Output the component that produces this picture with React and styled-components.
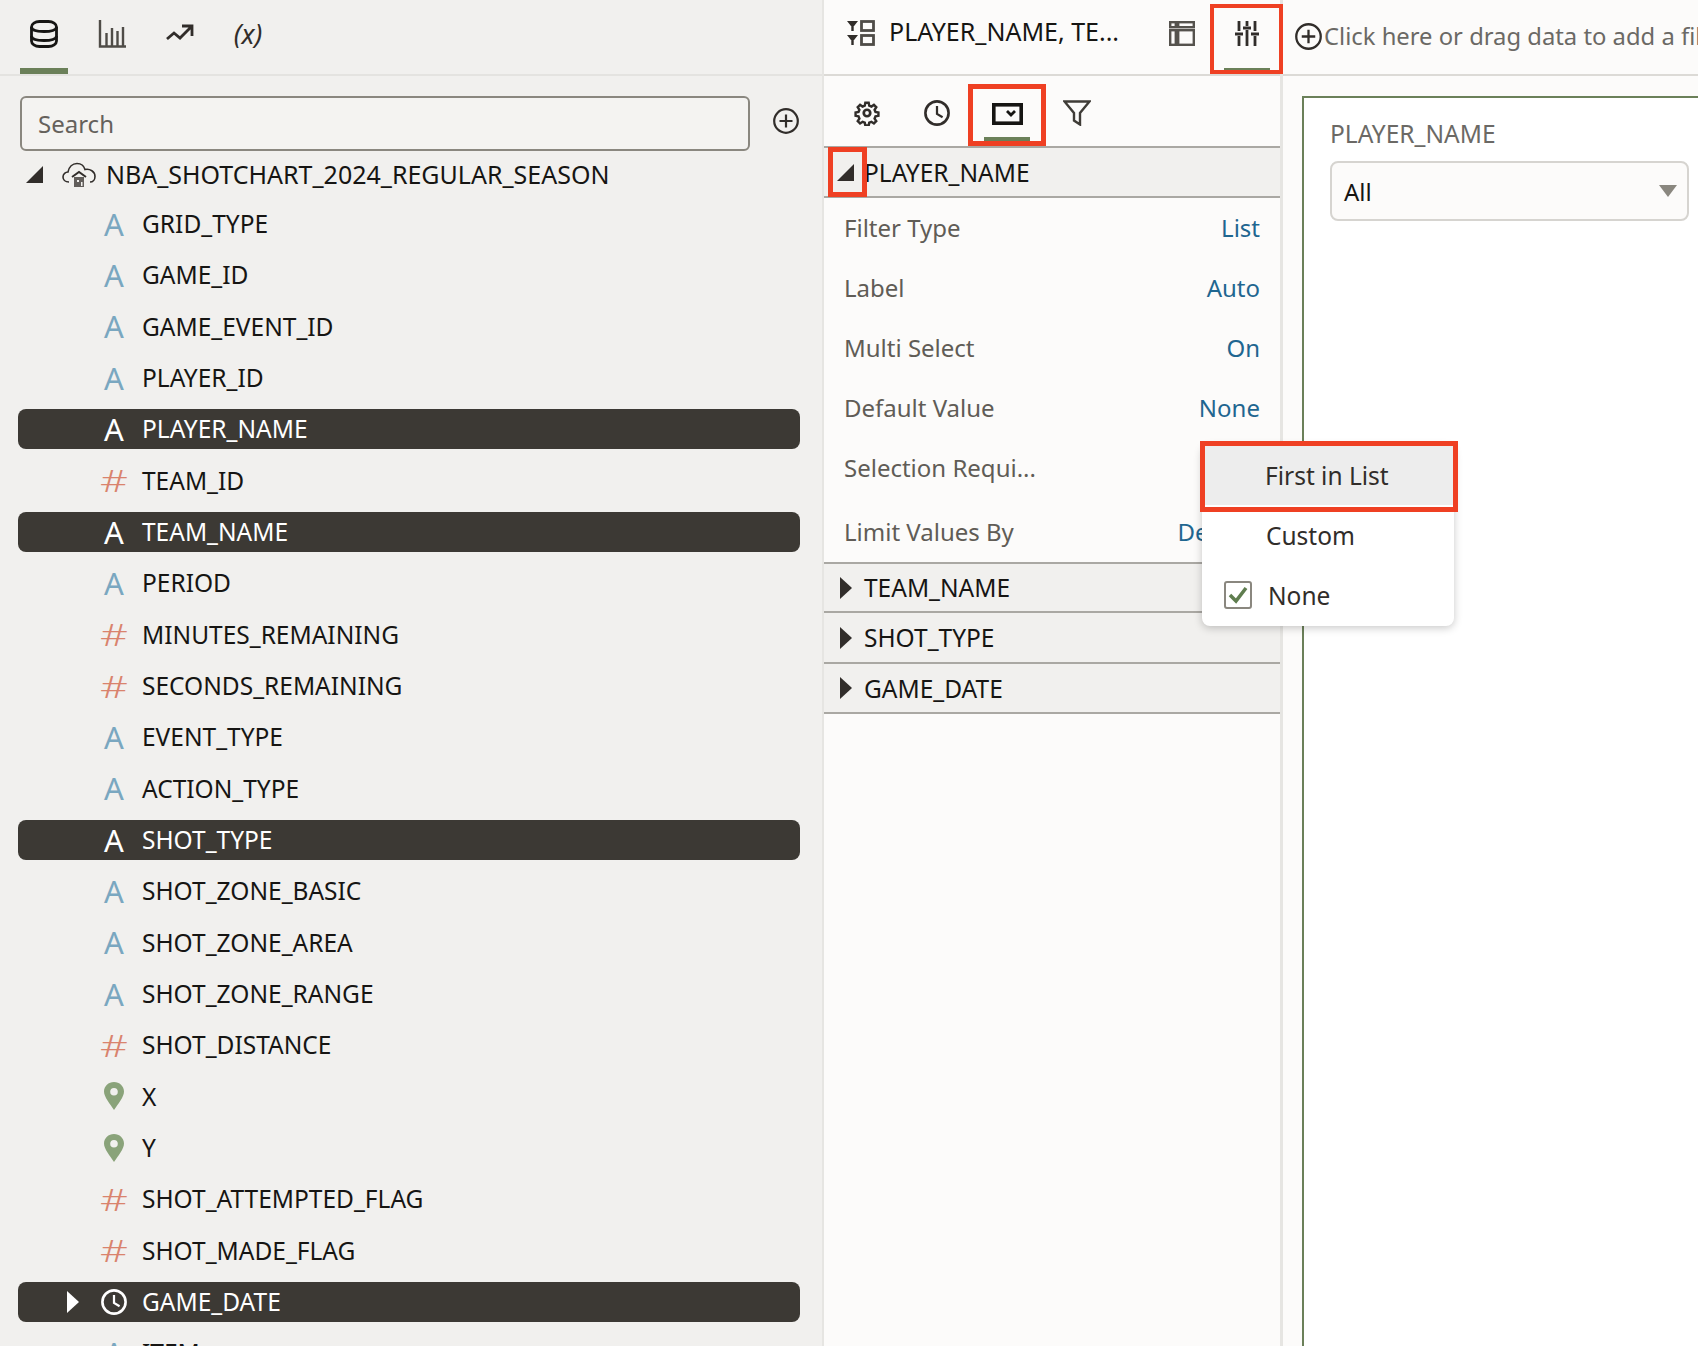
import styled, { createGlobalStyle } from "styled-components";

const GlobalStyle = createGlobalStyle`
  html, body { margin: 0; padding: 0; height: 100%; overflow: hidden; background: #fcfbfa; }
  body { font-family: "Noto Sans", "Liberation Sans", sans-serif; color: #161513; }
  * { box-sizing: border-box; }
`;

const Page = styled.div`
  display: grid;
  grid-template-columns: 824px 459px 1fr;
  width: 1698px;
  height: 1346px;
  overflow: hidden;
`;

/* ---- left data panel ---- */
const DataPane = styled.section`
  background: #f1f0ee;
  border-right: 2px solid #e6e5e2;
  display: flex;
  flex-direction: column;
  height: 1346px;
  overflow: hidden;
`;
const DataTabs = styled.div`
  height: 76px;
  flex: none;
  display: flex;
  padding-left: 20px;
  gap: 20px;
  border-bottom: 2px solid #e4e3e0;
`;
const DataTab = styled.div`
  width: 48px;
  height: 74px;
  padding-top: 20px;
  display: flex;
  justify-content: center;
  align-items: flex-start;
  border-bottom: 6px solid ${(p) => (p.$active ? "#6b8059" : "transparent")};
`;
const VarTab = styled.span`
  font-size: 27px;
  font-style: italic;
  line-height: 28px;
  color: #312d2a;
  white-space: nowrap;
`;
const SearchRow = styled.div`
  flex: none;
  display: flex;
  align-items: center;
  gap: 23px;
  padding: 20px 0 0 20px;
`;
const SearchInput = styled.div`
  width: 730px;
  height: 55px;
  border: 2px solid #8a877f;
  border-radius: 6px;
  padding-left: 16px;
  font-size: 24px;
  line-height: 51px;
  color: #65615c;
  background: #f4f3f1;
`;
const SearchAdd = styled.span`
  display: flex;
  margin-top: -6px;
`;
const Tree = styled.div`
  flex: none;
  padding: 0 0 0 18px;
  width: 800px;
`;
const RootRow = styled.div`
  height: 47px;
  display: flex;
  align-items: center;
  padding-left: 8px;
  font-size: 25px;
  white-space: nowrap;
`;
const RootName = styled.span`
  margin-left: 10px;
  margin-top: -2px;
`;
const FieldRow = styled.div`
  height: 51.33px;
  display: flex;
  align-items: center;
`;
const FieldInner = styled.div`
  width: 782px;
  height: 40px;
  display: flex;
  align-items: center;
  border-radius: 8px;
  font-size: 24.5px;
  background: ${(p) => (p.$on ? "#3c3934" : "transparent")};
  color: ${(p) => (p.$on ? "#fff" : "#161513")};
`;
const Twist = styled.span`
  width: 83px;
  flex: none;
  display: flex;
  justify-content: flex-end;
  padding-right: 22px;
`;
const TypeGlyph = styled.span`
  width: 26px;
  flex: none;
  font-size: 31px;
  line-height: 40px;
  display: flex;
  justify-content: center;
  align-items: center;
  color: ${(p) => p.$color};
`;
const HashGlyph = styled(TypeGlyph)`
  font-size: 32px;
  font-weight: 300;
  transform: scaleX(1.35);
`;
const FieldName = styled.span`
  margin-left: 15px;
`;

/* ---- middle properties panel ---- */
const PropsPane = styled.section`
  background: #fcfbfa;
  border-right: 3px solid #e6e5e2;
  position: relative;
  height: 1346px;
`;
const SourceBar = styled.div`
  height: 76px;
  border-bottom: 2px solid #dcdad6;
  display: flex;
  align-items: center;
  padding-left: 23px;
`;
const SourceText = styled.span`
  flex: none;
  font-size: 25px;
  margin-left: 14px;
  width: 272px;
  white-space: nowrap;
  margin-top: -12px;
`;
const BarIcon = styled.span`
  display: flex;
  flex: none;
  margin-top: -8px;
  margin-left: ${(p) => p.$ml || 0}px;
`;
const RedTab = styled.div`
  flex: none;
  width: 73px;
  height: 70px;
  margin: 4px 0 0 ${(p) => p.$ml || 0}px;
  align-self: flex-start;
  border: 4px solid #ef4023;
  display: flex;
  justify-content: center;
  padding-top: 13px;
  position: relative;
`;
const TabMark = styled.span`
  position: absolute;
  bottom: 0;
  left: 50%;
  transform: translateX(-50%);
  width: ${(p) => p.$w}px;
  height: ${(p) => p.$h || 4}px;
  background: #6b8059;
`;
const SubTabs = styled.div`
  height: 70px;
  display: flex;
  align-items: flex-start;
  padding: 8px 0 0 25px;
`;
const SubTab = styled.div`
  width: 36px;
  height: 58px;
  margin-right: ${(p) => p.$mr || 0}px;
  display: flex;
  justify-content: center;
  padding-top: 16px;
`;
const SubTabBoxed = styled.div`
  width: 78px;
  height: 62px;
  margin-right: 13px;
  border: 5px solid #ef4023;
  display: flex;
  justify-content: center;
  padding-top: 14px;
  position: relative;
`;
const Section = styled.div`
  height: ${(p) => p.$h || 50}px;
  background: #f1f0ee;
  border-bottom: 2px solid #aaa8a3;
  border-top: ${(p) => (p.$ruled ? "2px solid #aaa8a3" : "none")};
  display: flex;
  align-items: center;
  font-size: 24.5px;
  padding-left: 16px;
  position: relative;
`;
const SectionName = styled.span`
  margin-left: 12px;
`;
const TwistBox = styled.span`
  position: absolute;
  left: 4px;
  top: -1px;
  width: 39px;
  height: 50px;
  border: 5px solid #ef4023;
  display: flex;
  align-items: center;
  justify-content: center;
  padding-right: 5px;
`;
const BoxedName = styled.span`
  margin-left: 24px;
`;
const PropList = styled.div`
  height: 364px;
  padding: 0 20px 0 20px;
`;
const PropRow = styled.div`
  height: 60px;
  padding-bottom: 2px;
  display: flex;
  align-items: center;
  justify-content: space-between;
  font-size: 24px;
  margin-bottom: ${(p) => p.$mb || 0}px;
`;
const PropLabel = styled.span`
  color: #605c56;
  white-space: nowrap;
`;
const PropValue = styled.span`
  color: #1f6690;
`;
const Menu = styled.div`
  position: absolute;
  left: 378px;
  top: 445px;
  width: 252px;
  height: 181px;
  background: #fff;
  border-radius: 8px;
  box-shadow: 0 2px 8px rgba(0, 0, 0, 0.22);
  z-index: 5;
  font-size: 24.5px;
  color: #312d2a;
`;
const MenuHot = styled.div`
  position: absolute;
  left: -2px;
  top: -4px;
  width: 258px;
  height: 71px;
  border: 5px solid #ef4023;
  background: #ededed;
  box-shadow: inset 0 -2px 0 #fff;
  padding-left: 60px;
  line-height: 59px;
`;
const MenuItem = styled.div`
  height: 60px;
  display: flex;
  align-items: center;
  padding-left: ${(p) => p.$pl}px;
`;
const MenuSpacer = styled.div`
  height: 60px;
`;
const Check = styled.span`
  width: 28px;
  height: 28px;
  border: 2px solid #8a877f;
  border-radius: 3px;
  display: flex;
  align-items: center;
  justify-content: center;
  margin-right: 16px;
`;

/* ---- canvas ---- */
const CanvasPane = styled.section`
  height: 1346px;
  background: #fcfbfa;
  overflow: hidden;
`;
const FilterBar = styled.div`
  height: 76px;
  border-bottom: 2px solid #dcdad6;
  display: flex;
  align-items: center;
  padding: 0 0 2px 12px;
  color: #6b6965;
  font-size: 23.8px;
  white-space: nowrap;
`;
const FilterAdd = styled.span`
  display: flex;
  flex: none;
  margin-right: 2px;
`;
const CanvasFrame = styled.div`
  margin: 20px 0 0 19px;
  width: 500px;
  height: 1300px;
  border: solid #6b8059;
  border-width: 2px 0 0 2px;
  background: #fff;
  padding: 21px 0 0 26px;
`;
const FilterLabel = styled.div`
  font-size: 24.5px;
  line-height: 30px;
  color: #6b6965;
`;
const FilterSelect = styled.div`
  margin-top: 12px;
  width: 359px;
  height: 60px;
  border: 2px solid #d6d4d0;
  border-radius: 8px;
  background: #fcfbfa;
  display: flex;
  align-items: center;
  justify-content: space-between;
  padding: 0 10px 0 12px;
  font-size: 24px;
`;

/* ---- icons ---- */
const Tri = ({ dir = "right", color = "#312d2a" }) =>
  dir === "right" ? (
    <svg width="12" height="24" viewBox="0 0 12 24"><path d="M0 1l12 11L0 23z" fill={color} /></svg>
  ) : (
    <svg width="17" height="17" viewBox="0 0 17 17"><path d="M17 0v17H0z" fill={color} /></svg>
  );
const DbIcon = () => (
  <svg width="28" height="28" viewBox="0 0 28 28" fill="none" stroke="#161513" strokeWidth="2.8">
    <rect x="1.500" y="1.500" width="25" height="25" rx="8" ry="5.500" />
    <path d="M1.500 7c0 3 5.500 4.500 12.500 4.500S26.500 10 26.500 7M1.500 16c0 3 5.500 4.500 12.500 4.500s12.500-1.500 12.500-4.500" />
  </svg>
);
const BarsIcon = () => (
  <svg width="28" height="28" viewBox="0 0 28 28" fill="none" stroke="#4f4c47" strokeWidth="2.4">
    <path d="M2 0v26.500h26M8.500 26V13M14 26V8M19.500 26V11M25 26V7" />
  </svg>
);
const TrendIcon = () => (
  <svg width="28" height="20" viewBox="0 0 28 20" style={{ marginTop: 3 }} fill="none" stroke="#312d2a" strokeWidth="2.8">
    <path d="M1 16l7-6 6 5L25 4M16 3h10v10" />
  </svg>
);
const PlusCircle = ({ size = 26, color = "#312d2a" }) => (
  <svg width={size} height={size} viewBox="0 0 26 26" fill="none" stroke={color} strokeWidth="2.2">
    <circle cx="13" cy="13" r="11.800" /><path d="M13 6.500v13M6.500 13h13" />
  </svg>
);
const CloudIcon = () => (
  <svg width="34" height="26" viewBox="0 0 34 26" fill="none" stroke="#312d2a" strokeWidth="1.600" style={{ marginLeft: 19 }}>
    <path d="M7 20C3 20 1 17.500 1 15c0-3 2.500-5 5-5C7 5 10.500 1.500 15 1.500c4 0 7 2.500 8 6 5-1 10 2 10 7 0 3-2 5.500-5 5.500" />
    <path d="M10 15l7-5 7 5" strokeWidth="2" />
    <path d="M12 15h10v10H12z" fill="#312d2a" stroke="none" opacity=".75" />
    <path d="M15 18h2v2h-2zM19 20h1.500v4H19z" fill="#f1f0ee" stroke="none" />
  </svg>
);
const PinIcon = () => (
  <svg width="20" height="28" viewBox="0 0 20 28">
    <path fillRule="evenodd" d="M10 0c5.500 0 10 4.200 10 9.500C20 15 14 22 10 28 6 22 0 15 0 9.500 0 4.200 4.500 0 10 0zm0 6a3.800 3.800 0 100 7.600A3.800 3.800 0 0010 6z" fill="#8aa37a" />
  </svg>
);
const ClockIcon = ({ color = "#fff", size = 28 }) => (
  <svg width={size} height={size} viewBox="0 0 28 28" fill="none" stroke={color} strokeWidth="2.800">
    <circle cx="14" cy="14" r="12.500" /><path d="M14 6.500V15l6 3.500" strokeWidth="2.400" />
  </svg>
);
const FilterListIcon = () => (
  <svg width="28" height="26" viewBox="0 0 28 26" fill="none" stroke="#4f4c47" strokeWidth="2.800">
    <path d="M0 1h11L5.500 8zM0 15h11l-5.500 7z" fill="#312d2a" stroke="none" />
    <path d="M5.500 7v4M5.500 21v4" strokeWidth="2.400" stroke="#312d2a" />
    <rect x="14.500" y="1.500" width="12" height="9" /><rect x="14.500" y="15.500" width="12" height="9" />
  </svg>
);
const LayoutIcon = () => (
  <svg width="26" height="25" viewBox="0 0 26 25" fill="none" stroke="#55524d" strokeWidth="2.400">
    <rect x="1.200" y="1.200" width="5.600" height="5" />
    <rect x="9.200" y="1.200" width="15.600" height="5" />
    <rect x="1.200" y="9.200" width="5.600" height="14.600" />
    <rect x="9.200" y="9.200" width="15.600" height="14.600" />
  </svg>
);
const SlidersIcon = () => (
  <svg width="24" height="25" viewBox="0 0 24 25" fill="none" stroke="#312d2a" strokeWidth="2.800">
    <path d="M4 0v10M4 15v10M12 0v5M12 9v16M20 0v10M20 15v10" />
    <path d="M0 13h8M8 7h8M16 13h8" />
  </svg>
);
const GearIcon = () => (
  <svg width="26" height="26" viewBox="0 0 24 24" fill="none" stroke="#312d2a" strokeWidth="2.500">
    <circle cx="12" cy="12" r="3" />
    <path d="M10.300 1.500h3.400l.6 3 2.200.9 2.600-1.700 2.400 2.400-1.700 2.600.9 2.200 3 .6v3.400l-3 .6-.9 2.200 1.700 2.600-2.400 2.400-2.600-1.700-2.200.9-.6 3h-3.400l-.6-3-2.200-.9-2.600 1.700-2.400-2.400 1.700-2.600-.9-2.200-3-.6v-3.400l3-.6.9-2.200-1.700-2.600 2.400-2.400 2.600 1.700 2.200-.9z" transform="translate(1.200 1.200) scale(.9)" />
  </svg>
);
const ListBoxIcon = () => (
  <svg width="31" height="22" viewBox="0 0 31 22" fill="none" stroke="#161513" strokeWidth="3.600">
    <rect x="1.800" y="1.800" width="27.400" height="18.400" /><path d="M15 8l4 4 4-4" strokeWidth="2.800" />
  </svg>
);
const FunnelIcon = () => (
  <svg width="28" height="26" viewBox="0 0 28 26" fill="none" stroke="#3f3c37" strokeWidth="2.400">
    <path d="M1.500 1.500h25L17 13v11.500l-6-4V13z" />
  </svg>
);

const TYPE = {
  A: <TypeGlyph $color="#7aa7c0">A</TypeGlyph>,
  H: <HashGlyph $color="#d9836d">#</HashGlyph>,
  P: <TypeGlyph><PinIcon /></TypeGlyph>,
  C: <TypeGlyph><ClockIcon /></TypeGlyph>,
};

const fields = [
  ["GRID_TYPE", "A"], ["GAME_ID", "A"], ["GAME_EVENT_ID", "A"], ["PLAYER_ID", "A"],
  ["PLAYER_NAME", "A", true], ["TEAM_ID", "H"], ["TEAM_NAME", "A", true], ["PERIOD", "A"],
  ["MINUTES_REMAINING", "H"], ["SECONDS_REMAINING", "H"], ["EVENT_TYPE", "A"], ["ACTION_TYPE", "A"],
  ["SHOT_TYPE", "A", true], ["SHOT_ZONE_BASIC", "A"], ["SHOT_ZONE_AREA", "A"], ["SHOT_ZONE_RANGE", "A"],
  ["SHOT_DISTANCE", "H"], ["X", "P"], ["Y", "P"], ["SHOT_ATTEMPTED_FLAG", "H"], ["SHOT_MADE_FLAG", "H"],
  ["GAME_DATE", "C", true], ["ITEM", "A"],
];

const props = [
  ["Filter Type", "List"], ["Label", "Auto"], ["Multi Select", "On"], ["Default Value", "None"],
  ["Selection Requi...", ""], ["Limit Values By", "Default"],
];

export default function App() {
  return (
    <Page>
      <GlobalStyle />
      <DataPane>
        <DataTabs>
          <DataTab $active><DbIcon /></DataTab>
          <DataTab><BarsIcon /></DataTab>
          <DataTab><TrendIcon /></DataTab>
          <DataTab><VarTab>(x)</VarTab></DataTab>
        </DataTabs>
        <SearchRow>
          <SearchInput>Search</SearchInput>
          <SearchAdd><PlusCircle /></SearchAdd>
        </SearchRow>
        <Tree>
          <RootRow>
            <Tri dir="down" />
            <CloudIcon />
            <RootName>NBA_SHOTCHART_2024_REGULAR_SEASON</RootName>
          </RootRow>
          {fields.map(([name, type, on]) => (
            <FieldRow key={name}>
              <FieldInner $on={on}>
                <Twist>{type === "C" && <Tri color="#fff" />}</Twist>
                {on && type === "A" ? <TypeGlyph $color="#fff">A</TypeGlyph> : TYPE[type]}
                <FieldName>{name}</FieldName>
              </FieldInner>
            </FieldRow>
          ))}
        </Tree>
      </DataPane>

      <PropsPane>
        <SourceBar>
          <BarIcon><FilterListIcon /></BarIcon>
          <SourceText>PLAYER_NAME, TE...</SourceText>
          <BarIcon $ml={8}><LayoutIcon /></BarIcon>
          <RedTab $ml={15}><SlidersIcon /><TabMark $w={46} $h={2} /></RedTab>
        </SourceBar>
        <SubTabs>
          <SubTab $mr={34}><GearIcon /></SubTab>
          <SubTab $mr={13}><ClockIcon color="#312d2a" size={26} /></SubTab>
          <SubTabBoxed><ListBoxIcon /><TabMark $w={46} /></SubTabBoxed>
          <SubTab><FunnelIcon /></SubTab>
        </SubTabs>
        <Section $ruled $h={52}>
          <TwistBox><Tri dir="down" /></TwistBox>
          <BoxedName>PLAYER_NAME</BoxedName>
        </Section>
        <PropList>
          {props.map(([label, value], i) => (
            <PropRow key={label} $mb={i === 4 ? 4 : 0}>
              <PropLabel>{label}</PropLabel>
              <PropValue>{value}</PropValue>
            </PropRow>
          ))}
        </PropList>
        <Section $ruled $h={51}><Tri /><SectionName>TEAM_NAME</SectionName></Section>
        <Section $h={51}><Tri /><SectionName>SHOT_TYPE</SectionName></Section>
        <Section $h={50}><Tri /><SectionName>GAME_DATE</SectionName></Section>
        <Menu>
          <MenuHot>First in List</MenuHot>
          <MenuSpacer />
          <MenuItem $pl={64}>Custom</MenuItem>
          <MenuItem $pl={22}>
            <Check>
              <svg width="20" height="18" viewBox="0 0 20 18" fill="none" stroke="#5f7d4f" strokeWidth="3.500"><path d="M2 9l6 6L18 2" /></svg>
            </Check>
            None
          </MenuItem>
        </Menu>
      </PropsPane>

      <CanvasPane>
        <FilterBar>
          <FilterAdd><PlusCircle size={27} /></FilterAdd>
          Click here or drag data to add a filter
        </FilterBar>
        <CanvasFrame>
          <FilterLabel>PLAYER_NAME</FilterLabel>
          <FilterSelect>
            All
            <svg width="18" height="12" viewBox="0 0 18 12"><path d="M0 0h18L9 12z" fill="#8a877f" /></svg>
          </FilterSelect>
        </CanvasFrame>
      </CanvasPane>
    </Page>
  );
}
